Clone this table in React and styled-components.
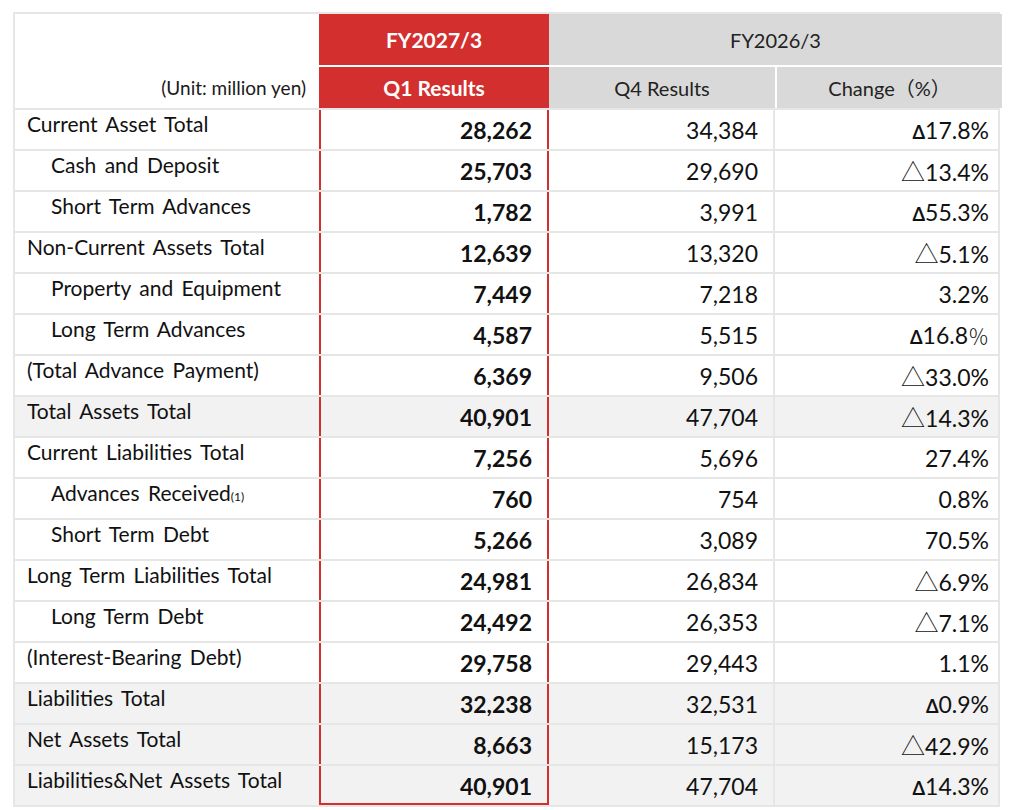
import React from 'react'
import styled, { createGlobalStyle } from 'styled-components'

const GlobalStyle = createGlobalStyle`
    html, body {
        margin: 0;
        padding: 0;
        background: #ffffff;
    }
    body {
        font-family: Lato, "Noto Sans CJK JP", sans-serif;
        color: #111111;
    }
`

const COLS = '304px 230px 226px 227px'
const RED = '#d32f2f'
const LINE = '#e6e6e6'

const Page = styled.div`
    padding: 12px 0 0 13px;
`

const Sheet = styled.div`
    width: 987px;
    border: 2px solid ${LINE};
    box-sizing: border-box;
`

const Head = styled.div`
    display: grid;
    grid-template-columns: ${COLS};
    grid-template-rows: 53px 41px;
`

const UnitCell = styled.div`
    grid-row: 1 / span 2;
    display: flex;
    align-items: flex-end;
    justify-content: flex-end;
    padding: 0 13px 9px 0;
    font-size: 19px;
    color: #1a1a1a;
`

const HeadCell = styled.div`
    display: flex;
    align-items: center;
    justify-content: center;
    box-sizing: border-box;
    font-size: ${p => (p.$red ? '21px' : '20px')};
    font-weight: ${p => (p.$red ? 700 : 400)};
    color: ${p => (p.$red ? '#ffffff' : '#222222')};
    background: ${p => (p.$red ? RED : '#d9d9d9')};
    border-bottom: ${p => (p.$top ? '2px solid #ffffff' : 'none')};
    border-left: ${p => (p.$split ? '2px solid #ffffff' : 'none')};
    grid-column: ${p => p.$span || 'auto'};
`

const Row = styled.div`
    display: grid;
    grid-template-columns: ${COLS};
    height: 41px;
    box-sizing: border-box;
    border-top: 2px solid ${LINE};
    background: ${p => (p.$shaded ? '#f2f2f2' : '#ffffff')};
`

const Label = styled.div`
    padding: 1px 0 0 ${p => (p.$indent ? 36 : 12)}px;
    font-size: 21px;
    line-height: 25px;
    word-spacing: 3px;
    white-space: nowrap;
`

const Note = styled.span`
    font-size: 12px;
    word-spacing: 0;
`

const Num = styled.div`
    box-sizing: border-box;
    padding: 6px 15px 0 0;
    text-align: right;
    font-size: 23px;
    line-height: 28px;
    font-weight: ${p => (p.$bold ? 700 : 400)};
    border-left: ${p => (p.$red ? `2px solid ${RED}` : 'none')};
    border-right: ${p => (p.$red ? `2px solid ${RED}` : `2px solid ${LINE}`)};
    border-bottom: ${p => (p.$last ? `2px solid ${RED}` : 'none')};
`

const Change = styled(Num)`
    border-right: none;
    padding-right: 13px;
`

const Mark = styled.span`
    font-family: ${p => (p.$wide ? '"Noto Sans CJK JP", sans-serif' : 'Lato, "DejaVu Sans", sans-serif')};
    font-weight: ${p => (p.$wide ? 300 : 700)};
    font-size: ${p => (p.$wide ? '24px' : '18px')};
`

const Pct = styled.span`
    font-family: "Noto Sans CJK JP", sans-serif;
    font-weight: 300;
    font-size: 21px;
`

const rows = [
    { label: 'Current Asset Total', q1: '28,262', q4: '34,384', ch: 'Δ17.8%' },
    { label: 'Cash and Deposit', indent: true, q1: '25,703', q4: '29,690', ch: '△13.4%' },
    { label: 'Short Term Advances', indent: true, q1: '1,782', q4: '3,991', ch: 'Δ55.3%' },
    { label: 'Non-Current Assets Total', q1: '12,639', q4: '13,320', ch: '△5.1%' },
    { label: 'Property and Equipment', indent: true, q1: '7,449', q4: '7,218', ch: '3.2%' },
    { label: 'Long Term Advances', indent: true, q1: '4,587', q4: '5,515', ch: 'Δ16.8％' },
    { label: '(Total Advance Payment)', q1: '6,369', q4: '9,506', ch: '△33.0%' },
    { label: 'Total Assets Total', q1: '40,901', q4: '47,704', ch: '△14.3%', shaded: true },
    { label: 'Current Liabilities Total', q1: '7,256', q4: '5,696', ch: '27.4%' },
    { label: 'Advances Received', note: '(1)', indent: true, q1: '760', q4: '754', ch: '0.8%' },
    { label: 'Short Term Debt', indent: true, q1: '5,266', q4: '3,089', ch: '70.5%' },
    { label: 'Long Term Liabilities Total', q1: '24,981', q4: '26,834', ch: '△6.9%' },
    { label: 'Long Term Debt', indent: true, q1: '24,492', q4: '26,353', ch: '△7.1%' },
    { label: '(Interest-Bearing Debt)', q1: '29,758', q4: '29,443', ch: '1.1%' },
    { label: 'Liabilities Total', q1: '32,238', q4: '32,531', ch: 'Δ0.9%', shaded: true },
    { label: 'Net Assets Total', q1: '8,663', q4: '15,173', ch: '△42.9%', shaded: true },
    { label: 'Liabilities&Net Assets Total', q1: '40,901', q4: '47,704', ch: 'Δ14.3%', shaded: true },
]

// the sign in front is either a white triangle or a greek delta, they look different
const renderChange = value => {
    let rest = value
    let mark = null
    if (rest[0] === '△' || rest[0] === 'Δ') {
        mark = <Mark $wide={rest[0] === '△'}>{rest[0]}</Mark>
        rest = rest.slice(1)
    }
    let pct = null
    if (rest.endsWith('％')) {
        pct = <Pct>％</Pct>
        rest = rest.slice(0, -1)
    }
    return (
        <>
            {mark}
            {rest}
            {pct}
        </>
    )
}

export default function App() {
    return (
        <Page>
            <GlobalStyle />
            <Sheet>
                <Head>
                    <UnitCell>(Unit: million yen)</UnitCell>
                    <HeadCell $red $top>FY2027/3</HeadCell>
                    <HeadCell $top $span="3 / span 2">FY2026/3</HeadCell>
                    <HeadCell $red>Q1 Results</HeadCell>
                    <HeadCell>Q4 Results</HeadCell>
                    <HeadCell $split>Change（%）</HeadCell>
                </Head>
                {rows.map((r, i) => (
                    <Row key={r.label} $shaded={r.shaded}>
                        <Label $indent={r.indent}>
                            {r.label}
                            {r.note && <Note>{r.note}</Note>}
                        </Label>
                        <Num $red $bold $last={i === rows.length - 1}>{r.q1}</Num>
                        <Num>{r.q4}</Num>
                        <Change>{renderChange(r.ch)}</Change>
                    </Row>
                ))}
            </Sheet>
        </Page>
    )
}
